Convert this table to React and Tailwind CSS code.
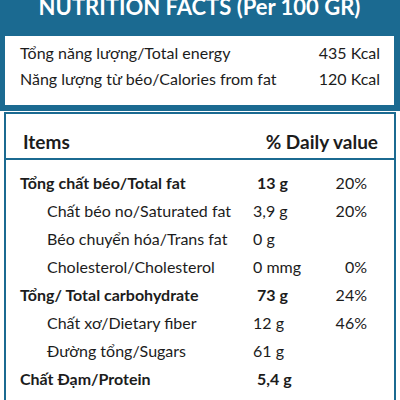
import React from "react";

const rows = [
  { name: "Tổng chất béo/Total fat", amount: "13 g", pct: "20%", bold: true },
  { name: "Chất béo no/Saturated fat", amount: "3,9 g", pct: "20%" },
  { name: "Béo chuyển hóa/Trans fat", amount: "0 g", pct: "" },
  { name: "Cholesterol/Cholesterol", amount: "0 mmg", pct: "0%" },
  { name: "Tổng/ Total carbohydrate", amount: "73 g", pct: "24%", bold: true },
  { name: "Chất xơ/Dietary fiber", amount: "12 g", pct: "46%" },
  { name: "Đường tổng/Sugars", amount: "61 g", pct: "" },
  { name: "Chất Đạm/Protein", amount: "5,4 g", pct: "", bold: true },
  { name: "Natri/Sodium", amount: "75 mg", pct: "3%" },
];

function App() {
  return (
    <div className="w-[400px] h-[400px] overflow-hidden bg-white text-[#1c1c1c] font-['Lato','Open_Sans',sans-serif]">
      <div className="bg-[#1b6a91] pl-[5px] pr-[6px] pb-[6px]">
        <h1 className="-mt-[11px] h-[47px] leading-[36px] text-center text-white font-bold text-[22px]">
          NUTRITION FACTS (Per 100 GR)
        </h1>
        <div className="bg-white pl-[15px] pr-[14px] pt-[4px] pb-[13px] text-[16px]">
          <div className="flex justify-between h-[26px] items-center">
            <span>Tổng năng lượng/Total energy</span>
            <span>435 Kcal</span>
          </div>
          <div className="flex justify-between h-[26px] items-center">
            <span>Năng lượng từ béo/Calories from fat</span>
            <span>120 Kcal</span>
          </div>
        </div>
      </div>

      <div className="mx-[4px] w-[392px] mt-[1px] border-2 border-[#1b6a91]">
        <div className="flex justify-between items-center h-[46px] pt-[12px] pl-[17px] pr-[16px] border-b-2 border-[#1b6a91] font-bold text-[19px]">
          <span>Items</span>
          <span>% Daily value</span>
        </div>
        <div className="pt-[9px] pl-[14px] text-[16px]">
          {rows.map((r) => (
            <div key={r.name} className="flex items-center h-[28px]">
              <span className={r.bold ? "w-[233px] font-bold" : "w-[233px] pl-[27px]"}>{r.name}</span>
              <span className={r.bold ? "w-[80px] pl-[4px] font-bold" : "w-[80px]"}>{r.amount}</span>
              <span className="w-[34px] text-right">{r.pct}</span>
            </div>
          ))}
        </div>
      </div>
    </div>
  );
}

export default App;
